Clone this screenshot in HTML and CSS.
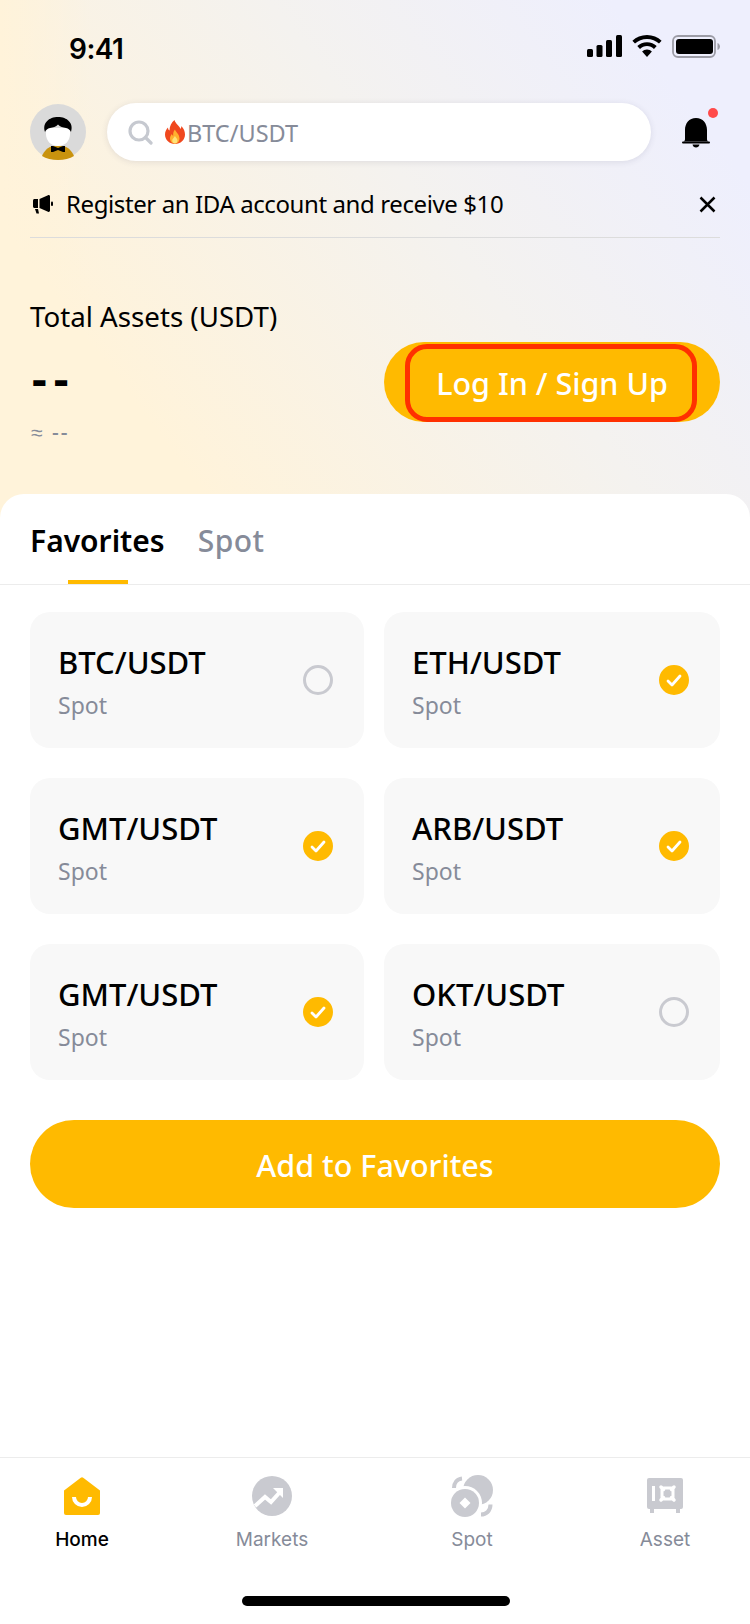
FILE: index.html
```html
<!DOCTYPE html>
<html lang="en">
<head>
    <meta charset="UTF-8">
    <title>Home</title>
    <link rel="stylesheet" href="styles.css">
</head>
<body>
    <div class="screen">
        <header class="top">
            <div class="status">
                <span class="time">9:41</span>
                <div class="status-icons">
                    <svg width="35" height="22" viewBox="0 0 35 22"><rect x="0" y="14" width="6" height="8" rx="1.5"/><rect x="9.5" y="10" width="6" height="12" rx="1.5"/><rect x="19" y="5" width="6" height="17" rx="1.5"/><rect x="29" y="0" width="6" height="22" rx="1.5"/></svg>
                    <svg width="30" height="22" viewBox="0 0 30 22"><path d="M15 0C9.300 0 4.200 2.200.4 5.800l2.600 2.800C6.100 5.700 10.300 3.900 15 3.900s8.900 1.800 12 4.700l2.600-2.800C25.800 2.200 20.700 0 15 0z"/><path d="M15 7.200c-3.800 0-7.200 1.500-9.700 3.900l2.700 2.800c1.800-1.700 4.300-2.800 7-2.800s5.200 1.100 7 2.800l2.700-2.800C22.200 8.700 18.800 7.200 15 7.200z"/><path d="M15 14.500c-1.900 0-3.600.7-4.900 2L15 22l4.900-5.500c-1.300-1.300-3-2-4.900-2z"/></svg>
                    <svg width="48" height="23" viewBox="0 0 48 23"><rect x="1" y="1" width="42" height="21" rx="5" fill="none" stroke="#9c9ca6" stroke-width="1.800"/><rect x="4" y="4" width="37" height="15" rx="3"/><path d="M45.500 8v7c1.500-.5 2.500-2 2.500-3.500S47 8.500 45.500 8z" fill="#9c9ca6"/></svg>
                </div>
            </div>

            <div class="search-row">
                <svg class="avatar" width="56" height="56" viewBox="0 0 56 56">
                    <circle cx="28" cy="28" r="28" fill="#dadada"/>
                    <path d="M12 52c2-5 6-9 11-10h10c5 1 9 5 11 10-4 2.500-10 4-16 4s-12-1.500-16-4z" fill="#c9930e"/>
                    <path d="M16 24h24v6c0 7-5 12-12 12s-12-5-12-12z" fill="#fff"/>
                    <path d="M15 28c-3-9 4-15 13-15s16 6 13 15c-1-2-2.500-3.500-5-4-3-.5-6-1-8-3.500-2 2.500-5 3-8 3.500-2.500.5-4 2-5 4z"/>
                    <path d="M23 42l5 2 5-2 2 0v6l-2 0-5-2-5 2-2 0v-6z"/>
                </svg>
                <div class="search">
                    <svg width="25" height="25" viewBox="0 0 25 25" fill="none" stroke="#c6c9d0" stroke-width="3.200" stroke-linecap="round"><circle cx="11" cy="11" r="9"/><path d="M17.500 17.500l5.500 5.500"/></svg>
                    <svg class="flame" width="20" height="24" viewBox="0 0 20 24"><path d="M9.500 0c1 4 5 5.500 6 9 .5-1 1-2 .8-3 2.500 2.500 3.700 5.500 3.700 8.500C20 20 15.500 24 10 24S0 20 0 14.500c0-3 1.500-5.500 3-7 0 1.500.5 2.500 1.500 3C4.500 6 6.500 2.500 9.500 0z" fill="#f0481e"/><path d="M10 9.500c.5 2.500 4.500 4.500 4.500 9 0 3-2 5-4.500 5s-5-2-5-5c0-2 1-3.500 2-4.500.2 1 .6 1.500 1.200 1.800C8 13 8.500 11 10 9.500z" fill="#ffb02e"/><path d="M10 16c.3 1.300 2.500 2.500 2.500 4.500 0 1.700-1.100 3-2.500 3s-2.800-1.300-2.800-3c0-1.800 2.100-3 2.800-4.500z" fill="#ffe27a"/></svg>
                    <span class="search-text">BTC/USDT</span>
                </div>
                <div class="bell">
                    <svg width="30" height="32" viewBox="0 0 30 32"><path d="M15 1C8 1 4 6.500 4 13v9c0 1.200-.4 1.800-1.200 2.500h24.400c-.8-.7-1.200-1.300-1.200-2.500v-9C26 6.500 22 1 15 1z"/><rect x="1" y="24.500" width="28" height="2" rx="1"/><path d="M11.500 27.500h7c-.3 2-1.800 3-3.500 3s-3.200-1-3.500-3z"/></svg>
                    <i class="dot"></i>
                </div>
            </div>

            <div class="notice">
                <svg width="20" height="20" viewBox="0 0 20 20"><path d="M0 6.500C0 5.700.7 5 1.500 5H5v9H1.500C.7 14 0 13.300 0 12.500z"/><path d="M6.500 5L15 1.200c1-.5 2 .2 2 1.200v14.200c0 1-1 1.700-2 1.200L6.500 14z"/><rect x="18" y="7.500" width="2" height="4.500" rx="1"/><path d="M2 15h3l1 4.500H3.500z"/></svg>
                <span class="notice-text">Register an IDA account and receive $10</span>
                <svg class="close" width="17" height="17" viewBox="0 0 17 17" fill="none" stroke="#000" stroke-width="2.500"><path d="M1.500 1.500l14 14M15.500 1.500l-14 14"/></svg>
            </div>

            <div class="assets">
                <div class="assets-label">Total Assets (USDT)</div>
                <div class="assets-row">
                    <div>
                        <div class="assets-value">--</div>
                        <div class="assets-sub">≈ --</div>
                    </div>
                    <div class="login">
                        <span class="login-inner">Log In / Sign Up</span>
                    </div>
                </div>
            </div>
        </header>

        <main class="sheet">
            <div class="tabs">
                <span class="tab active">Favorites</span>
                <span class="tab">Spot</span>
            </div>

            <div class="cards">
                <div class="card">
                    <div><div class="pair">BTC/USDT</div><div class="kind">Spot</div></div>
                    <span class="radio"></span>
                </div>
                <div class="card">
                    <div><div class="pair">ETH/USDT</div><div class="kind">Spot</div></div>
                    <span class="radio on"><svg width="16" height="13" viewBox="0 0 16 13" fill="none" stroke="#fff" stroke-width="2.800" stroke-linecap="round" stroke-linejoin="round"><path d="M2 7l4 4 8-9"/></svg></span>
                </div>
                <div class="card">
                    <div><div class="pair">GMT/USDT</div><div class="kind">Spot</div></div>
                    <span class="radio on"><svg width="16" height="13" viewBox="0 0 16 13" fill="none" stroke="#fff" stroke-width="2.800" stroke-linecap="round" stroke-linejoin="round"><path d="M2 7l4 4 8-9"/></svg></span>
                </div>
                <div class="card">
                    <div><div class="pair">ARB/USDT</div><div class="kind">Spot</div></div>
                    <span class="radio on"><svg width="16" height="13" viewBox="0 0 16 13" fill="none" stroke="#fff" stroke-width="2.800" stroke-linecap="round" stroke-linejoin="round"><path d="M2 7l4 4 8-9"/></svg></span>
                </div>
                <div class="card">
                    <div><div class="pair">GMT/USDT</div><div class="kind">Spot</div></div>
                    <span class="radio on"><svg width="16" height="13" viewBox="0 0 16 13" fill="none" stroke="#fff" stroke-width="2.800" stroke-linecap="round" stroke-linejoin="round"><path d="M2 7l4 4 8-9"/></svg></span>
                </div>
                <div class="card">
                    <div><div class="pair">OKT/USDT</div><div class="kind">Spot</div></div>
                    <span class="radio"></span>
                </div>
            </div>

            <div class="add-btn">Add to Favorites</div>
        </main>

        <nav class="nav">
            <div class="nav-item active">
                <svg width="36" height="38" viewBox="0 0 36 38"><path d="M16.800.8a2 2 0 0 1 2.400 0L36 13.500V36a2 2 0 0 1-2 2H2a2 2 0 0 1-2-2V13.500z" fill="#ffba00"/><path d="M10 20a8 8 0 0 0 16 0" fill="none" stroke="#fff" stroke-width="4"/></svg>
                <span>Home</span>
            </div>
            <div class="nav-item markets">
                <svg width="40" height="40" viewBox="0 0 40 40"><circle cx="20" cy="20" r="20" fill="#c9cad0"/><path d="M3 30l10-9 6 5 9-10" fill="none" stroke="#fff" stroke-width="4"/><path d="M21 12h10v10z" fill="#fff"/></svg>
                <span>Markets</span>
            </div>
            <div class="nav-item spot">
                <svg width="42" height="42" viewBox="0 0 42 42"><circle cx="27" cy="15" r="15" fill="#c9cad0"/><circle cx="14" cy="28" r="17" fill="#fff"/><circle cx="14" cy="28" r="14" fill="#c9cad0"/><path d="M14 22.500l5.500 5.500-5.500 5.500L8.500 28z" fill="#fff"/><path d="M3 13c0-5 3-9 8-9.500M30 39.500c5 0 9.500-3.500 9.500-10" fill="none" stroke="#c9cad0" stroke-width="4"/></svg>
                <span>Spot</span>
            </div>
            <div class="nav-item asset">
                <svg width="36" height="42" viewBox="0 0 36 42"><g transform="translate(0 3)"><rect width="36" height="31" rx="2" fill="#c9cad0"/><rect x="3" y="30" width="4" height="5" fill="#c9cad0"/><rect x="29" y="30" width="4" height="5" fill="#c9cad0"/><rect x="5" y="8" width="3" height="15" fill="#fff"/><rect x="15" y="10" width="11" height="11" rx="2" fill="none" stroke="#fff" stroke-width="3"/><path d="M14 9l2.500 2.500M27 9l-2.500 2.500M14 22l2.500-2.500M27 22l-2.500-2.500" stroke="#fff" stroke-width="3.500" stroke-linecap="round"/></g></svg>
                <span>Asset</span>
            </div>
        </nav>

        <div class="home-bar"><i></i></div>
    </div>
</body>
</html>
```

FILE: styles.css
```css
* {
    box-sizing: border-box;
}
body {
    margin: 0;
    background: #fff;
    font-family: "Noto Sans", Arial, sans-serif;
    color: #000;
}
.screen {
    width: 750px;
    height: 1624px;
    overflow: hidden;
    display: flex;
    flex-direction: column;
    background-color: #fff;
    background-image: linear-gradient(90deg, #fff3da 0, rgba(255, 243, 218, 0) 90px), linear-gradient(53deg, #fff3da 20%, #f4f2ef 58%, #eeeffd 88%);
    background-size: 100% 530px;
    background-repeat: no-repeat;
}

/* status bar */
.status {
    height: 103px;
    padding: 34px 30px 0 69px;
    display: flex;
    justify-content: space-between;
    align-items: flex-start;
}
.time {
    font-family: Inter, sans-serif;
    font-size: 28px;
    font-weight: 600;
    line-height: 30px;
    letter-spacing: -0.5px;
}
.status-icons {
    display: flex;
    gap: 10px;
    padding-top: 1px;
}

/* search */
.search-row {
    display: flex;
    align-items: center;
    height: 58px;
    padding: 0 30px;
}
.avatar {
    flex: none;
    margin-right: 21px;
}
.search {
    flex: 1;
    height: 58px;
    padding-left: 21px;
    display: flex;
    align-items: center;
    background: #fff;
    border-radius: 29px;
    box-shadow: 0 1px 6px rgba(60, 60, 90, 0.12);
    color: #868b99;
    font-size: 23.5px;
}
.search-text {
    padding-top: 2px;
}
.flame {
    margin: 0 2px 0 12px;
}
.bell {
    position: relative;
    flex: none;
    width: 39px;
    margin-left: 30px;
    display: flex;
    padding-top: 2px;
}
.dot {
    position: absolute;
    left: 27px;
    top: -7px;
    width: 10px;
    height: 10px;
    border-radius: 50%;
    background: #ff4a4a;
}

/* notice */
.notice {
    margin: 28px 30px 0;
    padding: 0 3px 18px;
    height: 49px;
    display: flex;
    align-items: center;
    border-bottom: 1px solid #dcdcdc;
}
.notice-text {
    flex: 1;
    margin-left: 13px;
    font-size: 24px;
    line-height: 30px;
    letter-spacing: -0.4px;
}
.close {
    flex: none;
    margin-right: 1px;
}

/* assets */
.assets {
    padding: 62px 30px 50px;
}
.assets-label {
    font-size: 27.7px;
    line-height: 32px;
}
.assets-row {
    margin-top: 10px;
    display: flex;
    justify-content: space-between;
    align-items: flex-start;
}
.assets-value {
    padding-left: 2px;
    font-size: 46px;
    font-weight: 700;
    line-height: 72px;
    letter-spacing: 7px;
}
.assets-sub {
    margin-top: 6px;
    padding-left: 1px;
    font-size: 21px;
    font-weight: 500;
    line-height: 24px;
    letter-spacing: 2px;
    color: #868b99;
}
.login {
    width: 336px;
    height: 80px;
    padding: 2px 23px 0 21px;
    background: #ffba00;
    border-radius: 40px;
}
.login-inner {
    display: flex;
    align-items: center;
    justify-content: center;
    height: 78px;
    padding-left: 2px;
    border: 5px solid #ff3000;
    border-radius: 22px;
    color: #fff;
    font-size: 30.5px;
    font-weight: 500;
}

/* sheet */
.sheet {
    background: #fff;
    border-radius: 24px 24px 0 0;
}
.tabs {
    height: 91px;
    padding: 28px 30px 0;
    display: flex;
    gap: 33px;
    border-bottom: 1px solid #ececec;
}
.tab {
    position: relative;
    font-size: 30px;
    font-weight: 500;
    line-height: 38px;
    letter-spacing: 0.5px;
    color: #868b99;
}
.tab.active {
    color: #000;
    font-weight: 600;
    letter-spacing: 0;
}
.tab.active::after {
    content: "";
    position: absolute;
    left: 38px;
    top: 58px;
    width: 60px;
    height: 4px;
    background: #ffba00;
}

/* cards */
.cards {
    margin-top: 27px;
    padding: 0 30px;
    display: grid;
    grid-template-columns: 334px 336px;
    grid-auto-rows: 136px;
    column-gap: 20px;
    row-gap: 30px;
}
.card {
    padding: 32px 31px 0 28px;
    display: flex;
    justify-content: space-between;
    background: #f8f8f8;
    border-radius: 20px;
}
.pair {
    font-size: 31px;
    font-weight: 500;
    line-height: 36px;
}
.kind {
    margin-top: 12px;
    font-size: 23px;
    line-height: 26px;
    color: #868b99;
}
.radio {
    width: 30px;
    height: 30px;
    margin-top: 21px;
    display: flex;
    align-items: center;
    justify-content: center;
    border: 3px solid #c9cad0;
    border-radius: 50%;
}
.radio.on {
    background: #ffba00;
    border-color: #ffba00;
}
.add-btn {
    height: 88px;
    margin: 40px 30px 0;
    padding-top: 2px;
    display: flex;
    align-items: center;
    justify-content: center;
    background: #ffba00;
    border-radius: 44px;
    color: #fff;
    font-size: 30.5px;
    font-weight: 500;
}

/* bottom nav */
.nav {
    margin-top: auto;
    padding: 17px 0 0 32px;
    height: 139px;
    display: flex;
    border-top: 1px solid #ececec;
}
.nav-item {
    width: 100px;
    height: 80px;
    display: flex;
    flex-direction: column;
    align-items: center;
    font-family: Inter, sans-serif;
    font-size: 19px;
    color: #868b99;
}
.nav-item svg {
    height: 42px;
}
.nav-item span {
    margin-top: 10px;
    line-height: 26px;
}
.nav-item.active {
    color: #000;
    font-weight: 500;
}
.markets {
    margin-left: 90px;
}
.spot {
    margin-left: 100px;
}
.asset {
    margin-left: 93px;
}
.home-bar {
    height: 28px;
    padding-left: 2px;
    display: flex;
    justify-content: center;
}
.home-bar i {
    width: 268px;
    height: 10px;
    border-radius: 5px;
    background: #000;
}
```
